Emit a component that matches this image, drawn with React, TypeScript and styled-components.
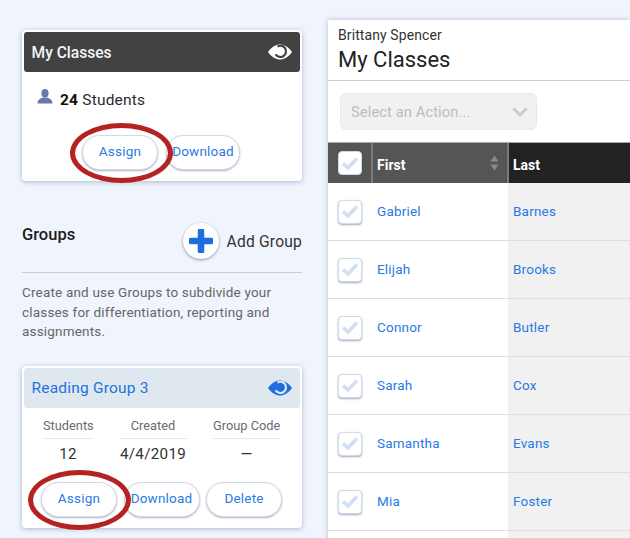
import React from "react";
import styled, { createGlobalStyle } from "styled-components";

const Global = createGlobalStyle`
  html, body { margin: 0; padding: 0; background: #f0f4fd; width: 630px; height: 538px; overflow: hidden; }
  * { box-sizing: border-box; }
  body { font-family: Roboto, "Liberation Sans", sans-serif; color: #222; }
`;

const Page = styled.div`
  position: relative;
  display: flex;
  align-items: flex-start;
  width: 630px;
  height: 538px;
  overflow: hidden;
  padding-left: 22px;
`;
const Sidebar = styled.aside`
  width: 280px;
  flex: none;
  padding-top: 30px;
  display: flex;
  flex-direction: column;
`;
const Card = styled.section`
  background: #fff;
  border-radius: 4px;
  padding: 2px;
  box-shadow: 0 1px 5px rgba(70, 85, 130, 0.4);
`;
const CardHeader = styled.header<{ $tone: "dark" | "light" }>`
  height: 40px;
  border-radius: 3px;
  padding: 0 8px 0 7.5px;
  display: flex;
  align-items: center;
  justify-content: space-between;
  background: ${(p) => (p.$tone === "dark" ? "#424242" : "#dfe8ef")};
  color: ${(p) => (p.$tone === "dark" ? "#f5f5f5" : "#1f73e0")};
`;
const ClassTitle = styled.h2`
  margin: 0;
  font-size: 15.6px;
  font-weight: 500;
  padding-top: 1px;
`;
const GroupTitle = styled.h2`
  margin: 0;
  font-size: 15.5px;
  font-weight: 400;
  letter-spacing: 0.2px;
`;
const StudentLine = styled.div`
  height: 63px;
  padding: 0 0 7px 13px;
  display: flex;
  align-items: center;
  gap: 7px;
  font-size: 15.5px;
  letter-spacing: 0.2px;
  color: #2b2b2b;
  & b { font-weight: 700; color: #111; }
  & svg { margin-bottom: 7px; }
`;
const ButtonRow = styled.div<{ $left: number; $bottom: number; $gap: number }>`
  display: flex;
  padding-left: ${(p) => p.$left}px;
  padding-bottom: ${(p) => p.$bottom}px;
  gap: ${(p) => p.$gap}px;
`;
const Pill = styled.button<{ $w: number }>`
  width: ${(p) => p.$w}px;
  height: 34.5px;
  padding: 0 0 2px;
  background: #fff;
  border: 1px solid #d3d9e6;
  border-radius: 18px;
  box-shadow: 0 1px 2px rgba(70, 85, 130, 0.45);
  color: #2a7ae2;
  font: 400 13.5px Roboto, sans-serif;
  letter-spacing: 0.2px;
`;
const GroupsHead = styled.div`
  margin-top: 42px;
  height: 50px;
  display: flex;
  align-items: flex-start;
  justify-content: space-between;
  border-bottom: 1px solid #c9c9cf;
`;
const GroupsTitle = styled.h3`
  margin: 2px 0 0;
  font-size: 16.5px;
  font-weight: 500;
  color: #1c1c1c;
`;
const AddGroup = styled.div`
  display: flex;
  align-items: center;
  gap: 8px;
  font-size: 15.6px;
  letter-spacing: 0.2px;
  color: #333;
`;
const AddLabel = styled.span`
  padding-top: 1px;
`;
const Round = styled.span`
  width: 36px;
  height: 36px;
  border-radius: 50%;
  background: #fff;
  box-shadow: 0 1px 3px rgba(70, 85, 130, 0.6);
  display: flex;
  align-items: center;
  justify-content: center;
`;
const Blurb = styled.p`
  margin: 10px 0 0;
  height: 83px;
  font-size: 13.5px;
  line-height: 19.5px;
  letter-spacing: 0.18px;
  color: #666;
`;
const Stats = styled.div`
  display: grid;
  grid-template-columns: 50px 67px 67px;
  column-gap: 26.5px;
  padding: 10px 0 0 19px;
  height: 74px;
`;
const Stat = styled.div`
  text-align: center;
`;
const StatLabel = styled.div`
  height: 21px;
  font-size: 12.8px;
  line-height: 16px;
  color: #6b6b6b;
  border-bottom: 1px solid #e6e6e6;
  white-space: nowrap;
`;
const StatValue = styled.div`
  margin-top: 5px;
  font-size: 15.2px;
  line-height: 20px;
  letter-spacing: 0.3px;
  color: #333;
`;
const Panel = styled.main`
  margin-top: 20px;
  margin-left: 26px;
  width: 302px;
  flex: none;
  background: #fff;
  box-shadow: 0 0 5px rgba(70, 85, 130, 0.35);
`;
const PanelHead = styled.header`
  height: 61px;
  padding: 6px 10px 0;
  border-bottom: 1px solid #cfcfd2;
`;
const Owner = styled.div`
  font-size: 14px;
  line-height: 18px;
  letter-spacing: 0.1px;
  color: #333;
`;
const PanelTitle = styled.h1`
  margin: 3px 0 0;
  font-size: 22px;
  line-height: 26px;
  font-weight: 400;
  color: #222;
`;
const ActionBar = styled.div`
  height: 62px;
  padding: 12px;
  border-bottom: 1px solid #a9a9a9;
`;
const Select = styled.div`
  width: 197px;
  height: 37px;
  padding: 0 8px 0 10px;
  display: flex;
  align-items: center;
  justify-content: space-between;
  background: #f1f1f1;
  border: 1px solid #e9e9e9;
  border-radius: 6px;
  color: #bcbcbc;
  font-size: 14.7px;
  letter-spacing: 0.1px;
`;
const Row = styled.div<{ $head?: boolean }>`
  display: grid;
  grid-template-columns: ${(p) => (p.$head ? "45px" : "44px")} 136px 1fr;
  height: ${(p) => (p.$head ? 40 : 58)}px;
  border-bottom: ${(p) => (p.$head ? "none" : "1px solid #dedede")};
`;
const CheckCell = styled.div<{ $head?: boolean }>`
  display: flex;
  align-items: center;
  padding-left: 10px;
  background: ${(p) => (p.$head ? "#555" : "transparent")};
  border-right: ${(p) => (p.$head ? "2px solid #7c7c7c" : "none")};
`;
const Check = styled.span`
  width: 24px;
  height: 24px;
  border-radius: 4px;
  background: #fff;
  border: 1px solid #d3d9e6;
  box-shadow: 0 1px 2px rgba(70, 85, 130, 0.5);
  display: flex;
  align-items: center;
  justify-content: center;
`;
const HeadCell = styled.div<{ $dark?: boolean }>`
  display: flex;
  align-items: center;
  justify-content: space-between;
  padding: 4px 8px 0 4px;
  background: ${(p) => (p.$dark ? "#222" : "#555")};
  border-right: ${(p) => (p.$dark ? "none" : "2px solid #7c7c7c")};
  color: #fff;
  font-size: 14px;
  font-weight: 700;
  & svg { margin-top: -4px; }
`;
const Cell = styled.div<{ $shade?: boolean }>`
  display: flex;
  align-items: center;
  padding: 0 0 2px 5px;
  background: ${(p) => (p.$shade ? "#f1f1f1" : "transparent")};
  color: #2a7ae2;
  font-size: 13.5px;
  letter-spacing: 0.2px;
`;
const Annotation = styled.span<{ $x: number; $y: number; $w: number; $h: number }>`
  position: absolute;
  left: ${(p) => p.$x}px;
  top: ${(p) => p.$y}px;
  width: ${(p) => p.$w}px;
  height: ${(p) => p.$h}px;
  border: 5px solid #b42222;
  border-radius: 50%;
  pointer-events: none;
`;

const Eye = ({ color, pupil }: { color: string; pupil: string }) => (
  <svg width="24" height="16" viewBox="0 0 24 16">
    <path d="M0 8 C4 2.5 8 0.5 12 0.5 C16 0.5 20 2.5 24 8 C20 13.5 16 15.5 12 15.5 C8 15.5 4 13.5 0 8 Z" fill={color} />
    <path d="M9.5 2.6 A5.6 5.6 0 1 1 7.6 10.2" fill="none" stroke={pupil} strokeWidth="2.2" />
  </svg>
);
const Person = () => (
  <svg width="16" height="15" viewBox="0 0 16 15">
    <ellipse cx="8" cy="4.2" rx="3.6" ry="4.2" fill="#6e76ae" />
    <path d="M0.5 14.5 C0.5 10.5 3.5 9.5 6 8.5 L10 8.5 C12.5 9.5 15.5 10.5 15.5 14.5 Z" fill="#6e76ae" />
  </svg>
);
const Plus = () => (
  <svg width="24" height="24" viewBox="0 0 24 24">
    <path d="M12 2 V22 M2 12 H22" stroke="#1c6fdc" strokeWidth="6.5" strokeLinecap="round" />
  </svg>
);
const Tick = () => (
  <svg width="18" height="15" viewBox="0 0 18 15">
    <path d="M2 7.5 L7 12 L16 2.5" fill="none" stroke="#cfe0f5" strokeWidth="3.6" />
  </svg>
);
const Chevron = () => (
  <svg width="16" height="10" viewBox="0 0 16 10">
    <path d="M1.5 1.5 L8 8 L14.5 1.5" fill="none" stroke="#c9c9c9" strokeWidth="2.6" />
  </svg>
);
const Sort = () => (
  <svg width="9" height="16" viewBox="0 0 9 16">
    <path d="M4.5 0.5 L8.5 6.5 H0.5 Z" fill="#8a8a8a" />
    <path d="M4.5 15.5 L8.5 9.5 H0.5 Z" fill="#8a8a8a" />
  </svg>
);

const students = [
  ["Gabriel", "Barnes"],
  ["Elijah", "Brooks"],
  ["Connor", "Butler"],
  ["Sarah", "Cox"],
  ["Samantha", "Evans"],
  ["Mia", "Foster"],
  ["", ""],
];
const stats = [
  ["Students", "12"],
  ["Created", "4/4/2019"],
  ["Group Code", "—"],
];

export default function App() {
  return (
    <Page>
      <Global />
      <Sidebar>
        <Card>
          <CardHeader $tone="dark">
            <ClassTitle>My Classes</ClassTitle>
            <Eye color="#fff" pupil="#424242" />
          </CardHeader>
          <StudentLine>
            <Person />
            <span>
              <b>24</b> Students
            </span>
          </StudentLine>
          <ButtonRow $left={58} $bottom={9.5} $gap={8}>
            <Pill $w={76}>Assign</Pill>
            <Pill $w={74}>Download</Pill>
          </ButtonRow>
        </Card>
        <GroupsHead>
          <GroupsTitle>Groups</GroupsTitle>
          <AddGroup>
            <Round>
              <Plus />
            </Round>
            <AddLabel>Add Group</AddLabel>
          </AddGroup>
        </GroupsHead>
        <Blurb>Create and use Groups to subdivide your classes for differentiation, reporting and assignments.</Blurb>
        <Card>
          <CardHeader $tone="light">
            <GroupTitle>Reading Group 3</GroupTitle>
            <Eye color="#1c6fdc" pupil="#dfe8ef" />
          </CardHeader>
          <Stats>
            {stats.map(([label, value]) => (
              <Stat key={label}>
                <StatLabel>{label}</StatLabel>
                <StatValue>{value}</StatValue>
              </Stat>
            ))}
          </Stats>
          <ButtonRow $left={17} $bottom={9.5} $gap={6.5}>
            <Pill $w={76}>Assign</Pill>
            <Pill $w={76}>Download</Pill>
            <Pill $w={76}>Delete</Pill>
          </ButtonRow>
        </Card>
      </Sidebar>
      <Panel>
        <PanelHead>
          <Owner>Brittany Spencer</Owner>
          <PanelTitle>My Classes</PanelTitle>
        </PanelHead>
        <ActionBar>
          <Select>
            Select an Action...
            <Chevron />
          </Select>
        </ActionBar>
        <Row $head>
          <CheckCell $head>
            <Check>
              <Tick />
            </Check>
          </CheckCell>
          <HeadCell>
            First
            <Sort />
          </HeadCell>
          <HeadCell $dark>Last</HeadCell>
        </Row>
        {students.map(([first, last], i) => (
          <Row key={i}>
            <CheckCell>
              {first && (
                <Check>
                  <Tick />
                </Check>
              )}
            </CheckCell>
            <Cell>{first}</Cell>
            <Cell $shade>{last}</Cell>
          </Row>
        ))}
      </Panel>
      <Annotation $x={70} $y={123} $w={103} $h={60} />
      <Annotation $x={28} $y={470} $w={103} $h={60} />
    </Page>
  );
}
